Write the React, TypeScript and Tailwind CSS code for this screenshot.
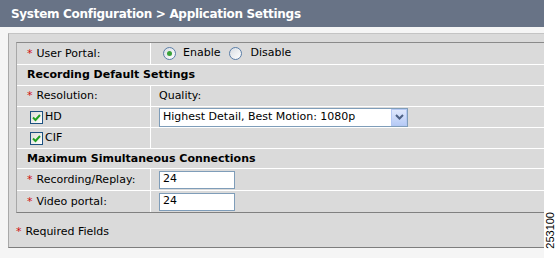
import React from 'react';

const font = "font-['DejaVu_Sans',Verdana,sans-serif]";

function Req() {
  return <span className="text-[#d01010] mr-[4px]">*</span>;
}

function Radio({ checked }: { checked?: boolean }) {
  return (
    <span className="w-[13px] h-[13px] rounded-full border border-[#5a7ea8] bg-gradient-to-br from-[#d8dde3] to-white flex items-center justify-center">
      {checked && <span className="w-[5px] h-[5px] rounded-full bg-[#3aa23a]" />}
    </span>
  );
}

function Check() {
  return (
    <span className="w-[13px] h-[13px] border border-[#1c5180] bg-gradient-to-br from-[#dcdcd6] to-white flex items-center justify-center">
      <svg width="9" height="9" viewBox="0 0 9 9">
        <path d="M1 4.5 L3.5 7 L8 2" stroke="#21a121" strokeWidth="2" fill="none" />
      </svg>
    </span>
  );
}

function Row({ h, left, right, last }: { h: string; left: React.ReactNode; right?: React.ReactNode; last?: boolean }) {
  return (
    <div className={`flex ${h} ${last ? '' : 'border-b border-white'}`}>
      <div className="w-[134px] border-r border-white flex items-center pl-[10px] pt-[1px]">{left}</div>
      <div className="flex-1 flex items-center pl-[8px]">{right}</div>
    </div>
  );
}

function Section({ h, title }: { h: string; title: string }) {
  return (
    <div className={`flex items-center ${h} border-b border-white pl-[10px] pt-[1px] font-bold`}>{title}</div>
  );
}

function TextBox({ value }: { value: string }) {
  return (
    <div className="w-[76px] h-[18px] border border-[#7f9db9] bg-white flex items-center pl-[3px]">{value}</div>
  );
}

export default function App() {
  return (
    <div className={`flex w-[557px] h-[258px] bg-white text-[11px] text-black ${font}`}>
      <div className="w-[544px] flex flex-col bg-[#f5f5f5]">
        {/* Title bar */}
        <div className="h-[27px] bg-[#687386] text-white font-bold text-[12px] tracking-[-0.3px] flex items-center pl-[11px]">
          System Configuration &gt; Application Settings
        </div>

        <div className="pt-[6px] pl-[8px]">
          <div className="bg-[#dadada] border-l border-t border-b border-t-[#c4c4c4] border-l-[#a9a9a9] border-b-[#7d7d7d] pt-[8px] pl-[7px] h-[215px]">
            {/* Settings table */}
            <div className="border-t border-l border-b border-t-[#8a8a8a] border-l-[#a8a8a8] border-b-[#808080]">
              <Row
                h="h-[22px]"
                left={<span><Req />User Portal:</span>}
                right={
                  <div className="flex items-center pl-[4px]">
                    <Radio checked />
                    <span className="ml-[7px]">Enable</span>
                    <span className="ml-[9px]"><Radio /></span>
                    <span className="ml-[8px]">Disable</span>
                  </div>
                }
              />
              <Section h="h-[21px]" title="Recording Default Settings" />
              <Row h="h-[21px]" left={<span><Req />Resolution:</span>} right={<span>Quality:</span>} />
              <Row
                h="h-[21px]"
                left={<div className="flex items-center pl-[3px]"><Check /><span className="ml-[2px]">HD</span></div>}
                right={
                  <div className="w-[249px] h-[19px] border border-[#7f9db9] bg-white flex items-center justify-between">
                    <span className="pl-[3px]">Highest Detail, Best Motion: 1080p</span>
                    <span className="w-[16px] h-[17px] border border-[#b4c8f4] bg-gradient-to-b from-[#dfe8fc] to-[#b7cbf6] flex items-center justify-center">
                      <svg width="9" height="6" viewBox="0 0 9 6">
                        <path d="M1 1 L4.5 4.5 L8 1" stroke="#4d6185" strokeWidth="2" fill="none" />
                      </svg>
                    </span>
                  </div>
                }
              />
              <Row h="h-[21px]" left={<div className="flex items-center pl-[3px]"><Check /><span className="ml-[2px]">CIF</span></div>} />
              <Section h="h-[20px]" title="Maximum Simultaneous Connections" />
              <Row h="h-[22px]" left={<span><Req />Recording/Replay:</span>} right={<TextBox value="24" />} />
              <Row h="h-[21px]" last left={<span><Req />Video portal:</span>} right={<TextBox value="24" />} />
            </div>

            <div className="pt-[11px]">
              <Req />Required Fields
            </div>
          </div>
        </div>
      </div>

      <div className="flex-1 flex items-end justify-center pb-[9px]">
        <span className="[writing-mode:vertical-rl] rotate-180 font-['Liberation_Sans',Arial,sans-serif] text-[11px] leading-none">
          253100
        </span>
      </div>
    </div>
  );
}
